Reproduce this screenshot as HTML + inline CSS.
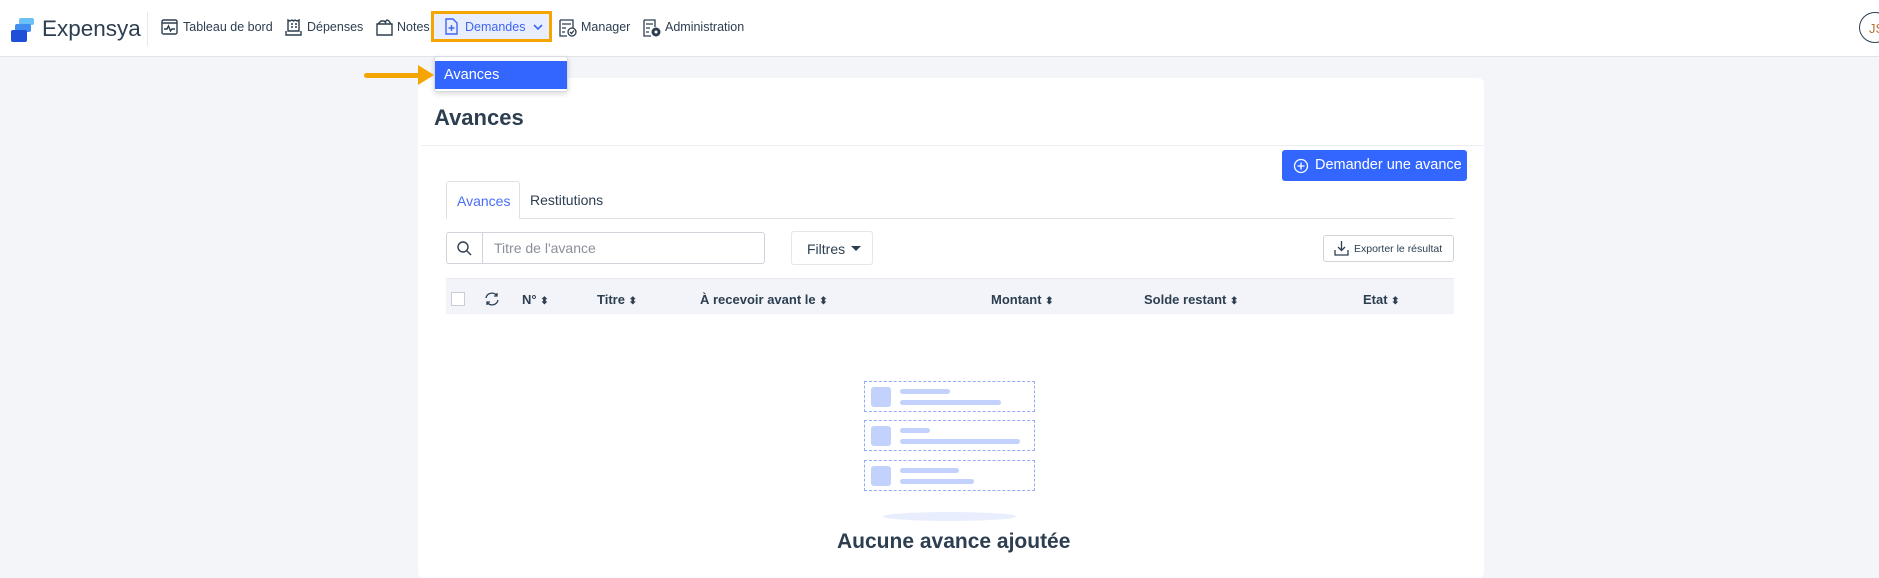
<!DOCTYPE html>
<html><head><meta charset="utf-8"><style>
*{box-sizing:border-box;margin:0;padding:0}
body{width:1879px;height:574px;overflow:hidden;background:#f4f5f9;font-family:"Liberation Sans",sans-serif;color:#2c3e50;position:relative}
.a{position:absolute}
.nav{left:0;top:0;width:1879px;height:57px;background:#fff;border-bottom:1px solid #e2e4ea}
.ni{position:absolute;top:20px;font-size:12.5px;color:#2c3e50;white-space:nowrap}
.ic{position:absolute;top:19px}
.card{left:418px;top:78px;width:1066px;height:500px;background:#fff;border-radius:6px}
.th{position:absolute;top:292px;font-size:13px;font-weight:bold;color:#2c3e50;white-space:nowrap}
.s{font-size:10px}
.bx{position:absolute;border:1px dashed #93aef8;width:171px;height:31px;left:864px}
.sq{position:absolute;left:6px;top:5px;width:20px;height:20px;background:#c3d2fc;border-radius:3px}
.ln{position:absolute;height:5px;border-radius:3px;background:#c3d2fc;left:35px}
</style></head><body>
<div class="a nav"></div>
<svg class="a" style="left:10px;top:18px" width="26" height="25" viewBox="0 0 26 25"><rect x="9" y="0" width="15" height="7" rx="2" fill="#6cc0f5"/><rect x="5" y="6" width="16" height="8" rx="2" fill="#3f8ef0"/><rect x="1" y="12" width="16" height="12" rx="2" fill="#1f4fd8"/></svg>
<div class="a" style="left:42px;top:16px;font-size:22.5px;color:#2c3e50">Expensya</div>
<div class="a" style="left:147px;top:12px;width:1px;height:34px;background:#e6e8ec"></div>
<svg class="ic" style="left:161px" width="17" height="16" viewBox="0 0 17 16" fill="none" stroke="#2c3e50" stroke-width="1.4"><rect x="1" y="1" width="15" height="14" rx="1.5"/><path d="M1 4h15M3 10h3l1.5-3 2 5 1.5-2h3"/></svg>
<div class="ni" style="left:183px">Tableau de bord</div>
<svg class="ic" style="left:285px" width="17" height="17" viewBox="0 0 17 17" fill="none" stroke="#2c3e50" stroke-width="1.4"><path d="M3 1v11h11V1l-2 1-2-1-1.5 1L7 1 5 2zM1 12v4h15v-4M6 5h2M6 8h2M10 5h2M10 8h2"/></svg>
<div class="ni" style="left:307px">Dépenses</div>
<svg class="ic" style="left:376px" width="17" height="17" viewBox="0 0 17 17" fill="none" stroke="#2c3e50" stroke-width="1.4"><path d="M1 5h15v11H1zM2 5l3-3h3l2 2M9 3l2-2 2 1 2 3"/></svg>
<div class="ni" style="left:397px">Notes</div>
<div class="a" style="left:431px;top:11px;width:121px;height:31px;border:3px solid #f5a500;background:#e9eeff"></div>
<svg class="ic" style="left:445px;top:18px" width="13" height="17" viewBox="0 0 13 17" fill="none" stroke="#3f66f2" stroke-width="1.4"><path d="M1 1h7l4 4v11H1zM6.5 7v6M3.5 10h6"/></svg>
<div class="ni" style="left:465px;color:#3f66f2">Demandes</div>
<svg class="ic" style="left:533px;top:24px" width="10" height="7" viewBox="0 0 10 7" fill="none" stroke="#3f66f2" stroke-width="1.6"><path d="M1 1l4 4 4-4"/></svg>
<svg class="ic" style="left:559px" width="18" height="18" viewBox="0 0 18 18" fill="none" stroke="#2c3e50" stroke-width="1.3"><path d="M1 1h13v8M1 1v16h7M3 5h9M3 9h4M3 13h3"/><circle cx="13" cy="13" r="4"/><path d="M11 13l1.5 1.5 2.5-3"/></svg>
<div class="ni" style="left:581px">Manager</div>
<svg class="ic" style="left:643px" width="18" height="18" viewBox="0 0 18 18" fill="none" stroke="#2c3e50" stroke-width="1.3"><path d="M1 1h11v7M1 1v16h7M3 5h7M3 9h4M3 13h3"/><circle cx="13" cy="13" r="3" stroke-width="3"/></svg>
<div class="ni" style="left:665px">Administration</div>
<div class="a" style="left:1859px;top:12px;width:32px;height:31px;border:1.5px solid #2c3e50;border-radius:50%;font-size:13px;color:#b07030;padding:8px 0 0 9px">JS</div>

<div class="a card"></div>
<div class="a" style="left:434px;top:105px;font-size:22px;font-weight:bold">Avances</div>
<div class="a" style="left:421px;top:145px;width:1062px;height:1px;background:#eceef2"></div>
<div class="a" style="left:1282px;top:150px;width:185px;height:31px;background:#3366ff;border-radius:3px;color:#fff;font-size:14.5px;padding:7px 0 0 33px">Demander une avance</div>
<svg class="a" style="left:1293px;top:158px" width="16" height="16" viewBox="0 0 16 16" fill="none" stroke="#fff" stroke-width="1.3"><circle cx="8" cy="8" r="6.5"/><path d="M8 4.5v7M4.5 8h7"/></svg>
<div class="a" style="left:446px;top:218px;width:1008px;height:1px;background:#dee2e6"></div>
<div class="a" style="left:446px;top:181px;width:74px;height:38px;background:#fff;border:1px solid #dee2e6;border-bottom:none;border-radius:3px 3px 0 0;color:#4a6cf7;font-size:14px;padding:11px 0 0 10px">Avances</div>
<div class="a" style="left:530px;top:192px;font-size:14px">Restitutions</div>
<div class="a" style="left:446px;top:232px;width:319px;height:32px;border:1px solid #ced4da;border-radius:3px"></div>
<div class="a" style="left:482px;top:233px;width:1px;height:30px;background:#ced4da"></div>
<svg class="a" style="left:457px;top:241px" width="15" height="15" viewBox="0 0 15 15" fill="none" stroke="#2c3e50" stroke-width="1.4"><circle cx="6" cy="6" r="5"/><path d="M10 10l4 4"/></svg>
<div class="a" style="left:494px;top:240px;font-size:14px;color:#8a8f98">Titre de l'avance</div>
<div class="a" style="left:791px;top:231px;width:82px;height:34px;border:1px solid #e3e6ea;border-radius:3px;font-size:14px;padding:9px 0 0 15px">Filtres</div>
<div class="a" style="left:851px;top:246px;width:0;height:0;border-left:5px solid transparent;border-right:5px solid transparent;border-top:5px solid #2c3e50"></div>
<div class="a" style="left:1323px;top:235px;width:131px;height:27px;border:1px solid #ced4da;border-radius:3px;font-size:10.5px;padding:7px 0 0 30px">Exporter le résultat</div>
<svg class="a" style="left:1334px;top:240px" width="15" height="16" viewBox="0 0 15 16" fill="none" stroke="#2c3e50" stroke-width="1.3"><path d="M7.5 1v9M4 7l3.5 3.5L11 7M1 10v5h13v-5"/></svg>
<div class="a" style="left:446px;top:278px;width:1008px;height:36px;background:#f3f4fa;border-top:1px solid #e8eaf0"></div>
<div class="a" style="left:451px;top:292px;width:14px;height:14px;background:#fff;border:1px solid #c8ccd4"></div>
<svg class="a" style="left:484px;top:291px" width="16" height="16" viewBox="0 0 16 16" fill="none" stroke="#2c3e50" stroke-width="1.3"><path d="M2 7a6 6 0 0 1 11-2M13 2v3h-3M14 9a6 6 0 0 1-11 2M3 14v-3h3"/></svg>
<div class="th" style="left:522px">N° <span class="s">⬍</span></div>
<div class="th" style="left:597px">Titre <span class="s">⬍</span></div>
<div class="th" style="left:700px">À recevoir avant le <span class="s">⬍</span></div>
<div class="th" style="left:991px">Montant <span class="s">⬍</span></div>
<div class="th" style="left:1144px">Solde restant <span class="s">⬍</span></div>
<div class="th" style="left:1363px">Etat <span class="s">⬍</span></div>

<div class="bx" style="top:381px"><div class="sq"></div><div class="ln" style="top:7px;width:50px"></div><div class="ln" style="top:18px;width:101px"></div></div>
<div class="bx" style="top:420px"><div class="sq"></div><div class="ln" style="top:7px;width:30px"></div><div class="ln" style="top:18px;width:120px"></div></div>
<div class="bx" style="top:460px"><div class="sq"></div><div class="ln" style="top:7px;width:59px"></div><div class="ln" style="top:18px;width:74px"></div></div>
<div class="a" style="left:883px;top:512px;width:133px;height:9px;border-radius:50%;background:#e8eefd"></div>
<div class="a" style="left:837px;top:530px;font-size:21px;font-weight:bold;color:#2c3e50">Aucune avance ajoutée</div>

<div class="a" style="left:434px;top:56px;width:134px;height:36px;background:#fff;border:1px solid #d8dbe2;border-radius:3px;box-shadow:0 2px 6px rgba(0,0,0,.15)"></div>
<div class="a" style="left:435px;top:61px;width:132px;height:28px;background:#3366ff;color:#fff;font-size:14.5px;padding:6px 0 0 9px">Avances</div>
<div class="a" style="left:364px;top:73px;width:56px;height:5px;background:#f5a500;border-radius:3px"></div>
<div class="a" style="left:418px;top:65px;width:0;height:0;border-top:10px solid transparent;border-bottom:10px solid transparent;border-left:16px solid #f5a500"></div>
</body></html>
